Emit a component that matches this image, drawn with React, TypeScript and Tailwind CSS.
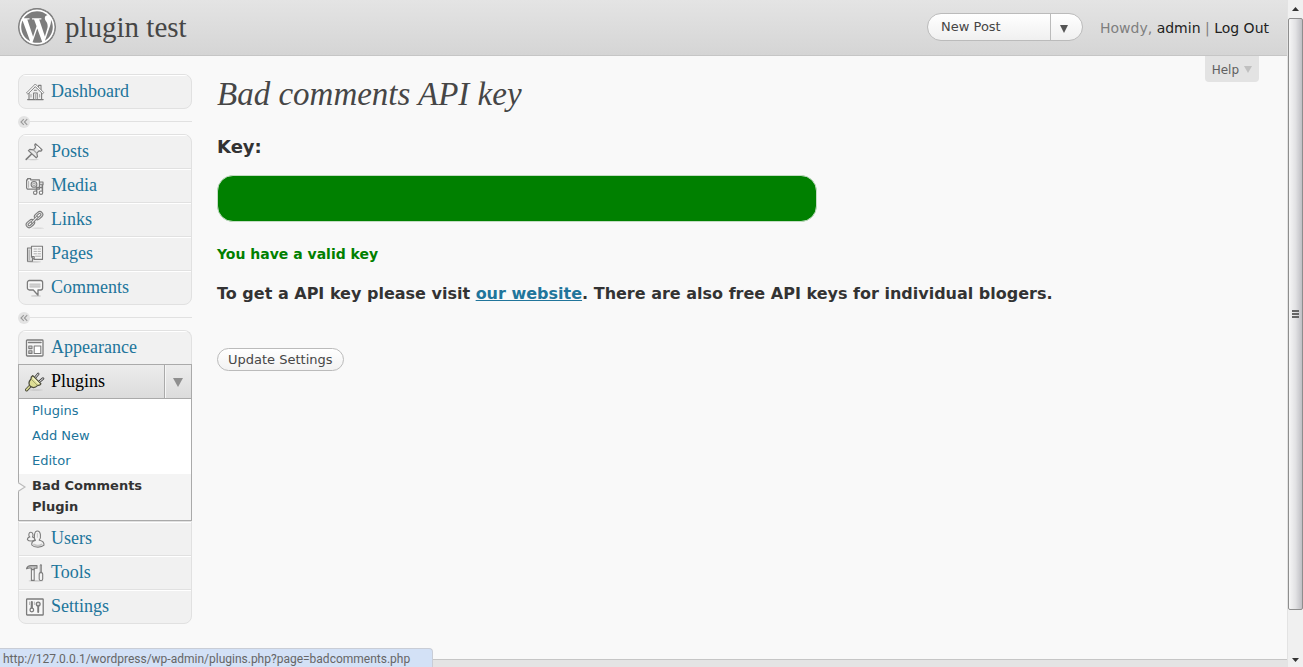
import React from "react";
import { FaWordpress } from "react-icons/fa";

type IconProps = { children: React.ReactNode };

function Icon({ children }: IconProps) {
  return (
    <svg
      viewBox="0 0 20 20"
      className="size-5 shrink-0"
      fill="none"
      stroke="#7c7c7c"
      strokeWidth="1.1"
      strokeLinejoin="round"
      strokeLinecap="round"
      aria-hidden="true"
    >
      {children}
    </svg>
  );
}

const Shade = ({ cx, rx }: { cx: number; rx: number }) => (
  <ellipse cx={cx} cy="17.9" rx={rx} ry="0.9" fill="#cfcfcf" stroke="none" />
);

const DashboardIcon = () => (
  <Icon>
    <path d="M13.6 6V3.4h2.4v5" fill="#fff" />
    <path d="M4 10v7.5h12.6V10L10.3 4.2Z" fill="#efefef" />
    <path d="M1.8 10.6 10.3 2l8.5 8.6-1.3 1.2-7.2-7.2-7.2 7.2Z" fill="#fff" strokeWidth="0.9" />
    <path d="M8.6 17.4V11h3.6v6.4" fill="#fff" />
    <path d="M9.4 8.2h2M2.6 17.6h15.6" />
    <path d="M6 12.6v2.4M14.6 12.6v2.4M10.4 12v5" stroke="#aaa" />
  </Icon>
);

const PostsIcon = () => (
  <Icon>
    <ellipse cx="8" cy="17.6" rx="6" ry="0.6" fill="#cfcfcf" stroke="none" />
    <path d="M6.6 12 1.2 17.4" strokeWidth="1.6" />
    <path
      d="M10.4 1.8 17 7.8 16 9.200l-2-.4-2.200 2.400.7 3.400-1.300 1.200L3.400 8.600 4.800 7.400l3.600.5 2.200-2.600-.9-2.200Z"
      fill="#e9e9e9"
      strokeWidth="1.2"
    />
    <path d="m8.400 8 3.200 3" stroke="#a8a8a8" />
    <path d="m12 4.800 2.600 2.500" stroke="#fff" strokeWidth="1.500" />
  </Icon>
);

const MediaIcon = () => (
  <Icon>
    <path d="M1.600 3.800h1V2.600h3v1.200h8.800v9.400H3.200a1.600 1.600 0 0 1-1.600-1.600Z" fill="#f5f5f5" strokeWidth="1.200" />
    <path d="M3.600 5.400v5.800" stroke="#b5b5b5" />
    <circle cx="9" cy="8.400" r="2.900" fill="#ddd" />
    <circle cx="9" cy="8.400" r="1.200" fill="#fff" stroke="#aaa" />
    <path d="M11.600 11.600v5M17.400 7v9.600M11.600 11.400h5.800" strokeWidth="1.500" />
    <circle cx="10.200" cy="16.700" r="1.700" fill="#fff" />
    <circle cx="16" cy="16.700" r="1.700" fill="#fff" />
    <path d="M14.600 6h3.400v2.800h-3.400Z" fill="#ddd" />
  </Icon>
);

const LinksIcon = () => (
  <Icon>
    <ellipse cx="13" cy="18.200" rx="6" ry="0.600" fill="#d3d3d3" stroke="none" />
    <rect x="-4.600" y="-3" width="9.200" height="6" rx="3" transform="translate(13.600 5.600) rotate(-42)" fill="#e4e4e4" />
    <rect x="-2.400" y="-1.100" width="4.800" height="2.200" rx="1.100" transform="translate(13.800 5.400) rotate(-42)" fill="#fff" />
    <rect x="-4.600" y="-3" width="9.200" height="6" rx="3" transform="translate(5.400 13.600) rotate(-42)" fill="#e4e4e4" />
    <rect x="-2.400" y="-1.100" width="4.800" height="2.200" rx="1.100" transform="translate(5.200 13.800) rotate(-42)" fill="#fff" />
    <path d="m7.200 12.200 4.800-5" strokeWidth="2.800" />
    <path d="m7.200 12.200 4.800-5" stroke="#eee" />
  </Icon>
);

const PagesIcon = () => (
  <Icon>
    <Shade cx={9} rx={7} />
    <path d="M2.500 4h5v13.300h-5Z" fill="#e2e2e2" />
    <path d="M4.200 6v9.400" stroke="#aaa" />
    <path d="M6.500 2.200h11v13.200H9.200l-2.700-2.600Z" fill="#f7f7f7" />
    <path d="M9 5h2.500M13 5h2.500M9 7.400h2.500M13 7.400h2.500M9 9.800h2.500M13 9.800h2.500M10.600 12.200h4.900" stroke="#a5a5a5" strokeWidth="0.900" />
    <path d="M6.600 12.600h2.600v2.600" />
  </Icon>
);

const CommentsIcon = () => (
  <Icon>
    <Shade cx={11} rx={5} />
    <path
      d="M4.400 2.500h11.200a2 2 0 0 1 2 2V10a2 2 0 0 1-2 2H13v5.200L8.300 12H4.400a2 2 0 0 1-2-2V4.500a2 2 0 0 1 2-2Z"
      fill="#fafafa"
      strokeWidth="1.300"
    />
    <path d="M4.600 5.600h10.800V10H4.600Z" fill="#d8d8d8" stroke="none" />
    <path d="M4.800 6.200h10.400M4.800 8.200h10.400" stroke="#bbb" strokeWidth="0.700" />
  </Icon>
);

const AppearanceIcon = () => (
  <Icon>
    <rect x="1.500" y="2" width="16.500" height="16" rx="0.800" fill="#f7f7f7" strokeWidth="1.300" />
    <path d="M3.500 4.600h12.500" strokeWidth="1.500" />
    <rect x="3.800" y="8" width="3.200" height="2.600" fill="#ccc" />
    <rect x="3.800" y="12.800" width="3.200" height="2.600" fill="#ccc" />
    <rect x="9.200" y="8" width="6.600" height="7.500" fill="#fff" />
  </Icon>
);

const PluginsIcon = () => (
  <Icon>
    <ellipse cx="11" cy="18" rx="7" ry="0.700" fill="#c8c8c8" stroke="none" />
    <path d="M5.400 13.800 1.600 17.800" stroke="#4c4c3c" strokeWidth="3.200" />
    <path d="M5.400 13.800 1.600 17.800" stroke="#dede94" strokeWidth="1.500" />
    <path d="m9.800 6 3.400-4M14 10l4-3.400" stroke="#444" strokeWidth="2.600" />
    <path d="m9.800 6 3.400-4M14 10l4-3.400" stroke="#f6f6f6" strokeWidth="1" />
    <path
      d="M7.800 3.600 16 11.800c-.8 1.400-2 1.800-3.200 1.600-2 2-5 2.600-7.200 1.200-2.200-2.200-1.800-5.200.4-7.600-.2-1.400.6-2.800 1.800-3.400Z"
      fill="#dede94"
      stroke="#4c4c3c"
      strokeWidth="1.200"
    />
    <path d="M6.800 7.800 12 13" stroke="#8c8c5c" strokeWidth="0.700" />
    <path d="M8 5.800 13.800 11.600" stroke="#f8f8d0" />
  </Icon>
);

const UsersIcon = () => (
  <Icon>
    <path
      d="M2.400 10.600c0-1.600 1-2.400 2.400-2.600C3.200 6.600 3.600 3.200 5.800 3.200S8.600 6.600 7.400 8c1.600.3 2.400 1.400 2.400 2.800-1.600 1.800-6 1.600-7.400-.2Z"
      fill="#f3f3f3"
    />
    <path
      d="M6.800 16c-.4-2.600 1.200-4.200 3.600-4.600C8.600 9 9 2 12.400 2s4 6.800 1.800 9.200c3 .4 5 2.400 4.800 5-2.400 2.600-9.800 2.600-12.200-.2Z"
      fill="#f3f3f3"
    />
    <path d="M9 15.400c2 1.200 5.600 1.200 7.600 0" stroke="#c6c6c6" strokeWidth="1.800" />
    <path d="M12.400 4.600v3.600" stroke="#ccc" />
  </Icon>
);

const ToolsIcon = () => (
  <Icon>
    <Shade cx={11} rx={7.5} />
    <path d="M1.600 5.200C2.600 3 4.600 2.600 6 2.600h6v2.600H9.200v1.400H6.400V5.200C4.400 4.800 3 5 1.600 5.800Z" fill="#c4c4c4" />
    <path d="M6.400 6.600h2.800V17.400H6.400Z" fill="#f6f6f6" />
    <path d="M15.900 2.400v7" strokeWidth="2.200" />
    <path d="M15.900 2.800v5.600" stroke="#ddd" strokeWidth="0.700" />
    <rect x="14.200" y="9.600" width="3.500" height="7.900" rx="1.500" fill="#f3f3f3" />
  </Icon>
);

const SettingsIcon = () => (
  <Icon>
    <rect x="1.600" y="2" width="16.600" height="16" rx="0.600" fill="#f7f7f7" strokeWidth="1.300" />
    <path d="M6.800 5v6" strokeWidth="2.200" />
    <circle cx="6.800" cy="13" r="1.800" fill="#fff" strokeWidth="1.300" />
    <circle cx="13.200" cy="7" r="1.900" fill="#ddd" strokeWidth="1.300" />
    <path d="M13.200 9.400V15" strokeWidth="1.900" />
    <path d="M4.500 5v2.600M9.400 5v2.600" stroke="#aaa" strokeWidth="0.800" />
  </Icon>
);

type Entry = { label: string; icon: () => React.JSX.Element };

const contentMenu: Entry[] = [
  { label: "Posts", icon: PostsIcon },
  { label: "Media", icon: MediaIcon },
  { label: "Links", icon: LinksIcon },
  { label: "Pages", icon: PagesIcon },
  { label: "Comments", icon: CommentsIcon },
];

const adminMenu: Entry[] = [
  { label: "Users", icon: UsersIcon },
  { label: "Tools", icon: ToolsIcon },
  { label: "Settings", icon: SettingsIcon },
];

function MenuItem({ label, icon: Glyph }: Entry) {
  return (
    <li className="border-b border-[#e1e1e1] last:border-b-0">
      <a
        href="#"
        className="flex h-[33px] items-center gap-1.5 border-t border-white pl-1.5 font-['Liberation_Serif',serif] text-lg/5 text-[#21759b]"
      >
        <Glyph />
        <span className="pb-0.5">{label}</span>
      </a>
    </li>
  );
}

const boxClass = "overflow-hidden rounded-lg border border-[#e1e1e1] bg-[#f1f1f1]";

function Separator() {
  return (
    <div className="flex h-[25px] items-center">
      <button
        type="button"
        aria-label="Collapse menu"
        className="grid size-3 place-items-center rounded-full bg-[#e3e3e3]"
      >
        <svg viewBox="0 0 8 8" className="size-2" fill="none" stroke="#9a9a9a" strokeWidth="1.100" aria-hidden="true">
          <path d="M3.800 1.200 1 4l2.800 2.800M7.200 1.200 4.400 4l2.800 2.800" />
        </svg>
      </button>
      <div className="h-px flex-1 bg-[#e1e1e1]" />
    </div>
  );
}

function Triangle({ className }: { className: string }) {
  return (
    <svg viewBox="0 0 10 9" preserveAspectRatio="none" className={className} fill="currentColor" aria-hidden="true">
      <path d="M0 0h10L5 9Z" />
    </svg>
  );
}

function Sidebar() {
  return (
    <nav className="w-[174px] shrink-0" aria-label="Main menu">
      <ul className={boxClass}>
        <MenuItem label="Dashboard" icon={DashboardIcon} />
      </ul>
      <Separator />
      <ul className={boxClass}>
        {contentMenu.map((item) => (
          <MenuItem key={item.label} {...item} />
        ))}
      </ul>
      <Separator />
      <ul className="overflow-hidden rounded-t-lg border border-b-0 border-[#e1e1e1] bg-[#f1f1f1]">
        <MenuItem label="Appearance" icon={AppearanceIcon} />
      </ul>
      <div className="border border-[#aaa]">
        <div className="flex h-[33px] bg-linear-to-b from-[#ececec] to-[#dcdcdc]">
          <a
            href="#"
            className="flex flex-1 items-center gap-1.5 border-r border-[#aaa] pl-1.5 font-['Liberation_Serif',serif] text-lg/5 text-black"
          >
            <PluginsIcon />
            <span className="pb-0.5">Plugins</span>
          </a>
          <button
            type="button"
            aria-label="Toggle Plugins menu"
            className="grid w-[26px] place-items-center border-l border-[#f6f6f6] pt-0.5 pr-0.5 text-[#8f8f8f]"
          >
            <Triangle className="h-[9px] w-2.5" />
          </button>
        </div>
        <ul className="border-t border-[#aaa] bg-white text-[13px] text-[#21759b]">
          {["Plugins", "Add New", "Editor"].map((label) => (
            <li key={label}>
              <a href="#" className="block pb-0.5 pl-[13px] leading-[23px]">
                {label}
              </a>
            </li>
          ))}
          <li className="relative bg-[#f4f4f4] pt-px pr-4 pb-[3px] pl-[13px] font-bold text-[#333]">
            <svg
              viewBox="0 0 8 10"
              className="absolute top-2 -left-px h-2.5 w-2"
              fill="#f9f9f9"
              stroke="#bbb"
              strokeWidth="1.200"
              aria-hidden="true"
            >
              <path d="M0 0.500 7 5 0 9.500" />
            </svg>
            <a href="#" className="block leading-[21px]">
              Bad Comments Plugin
            </a>
          </li>
        </ul>
      </div>
      <ul className="overflow-hidden rounded-b-lg border border-[#e1e1e1] bg-[#f1f1f1]">
        {adminMenu.map((item) => (
          <MenuItem key={item.label} {...item} />
        ))}
      </ul>
    </nav>
  );
}

function Header() {
  return (
    <header className="flex h-14 items-center justify-between border-b border-[#c6c6c6] bg-linear-to-b from-[#e4e4e4] to-[#d5d5d5] px-[18px] pb-0.5">
      <div className="flex items-center gap-[9px]">
        <div className="rounded-full bg-white ring-1 ring-[#7d7d7d] ring-inset">
          <FaWordpress className="size-[38px] text-[#7d7d7d]" />
        </div>
        <h1 className="font-['Liberation_Serif',serif] text-[29px]/8 text-[#464646]">
          <a href="#">plugin test</a>
        </h1>
      </div>
      <div className="flex items-center gap-[17px]">
        <div className="flex h-7 w-[156px] overflow-hidden rounded-full border border-[#bbb] bg-linear-to-b from-white to-[#f0f0f0] text-[13px] text-[#464646]">
          <a href="#" className="flex flex-1 items-center border-r border-[#bbb] pl-[13px]">
            New Post
          </a>
          <button type="button" aria-label="More actions" className="w-[31px] pt-1 pl-[9px] text-[#555]">
            <Triangle className="h-2 w-2" />
          </button>
        </div>
        <p className="pt-0.5 text-sm text-[#7f7f7f]">
          Howdy, <a href="#" className="text-[#222]">admin</a> |{" "}
          <a href="#" className="text-[#222]">Log Out</a>
        </p>
      </div>
    </header>
  );
}

function Scrollbar() {
  return (
    <div className="flex w-4 shrink-0 flex-col border-l border-[#e3e3e3] bg-[#f0f0f0]" aria-hidden="true">
      <div className="grid h-[18px] place-items-center text-[#333]">
        <Triangle className="h-1 w-[7px] rotate-180" />
      </div>
      <div className="flex grow-[592] basis-0 flex-col items-center justify-center gap-px rounded-xs border border-[#8e8e8e] bg-linear-to-r from-[#f6f6f6] via-[#e2e2e4] to-[#bfbfc4]">
        <i className="h-0.5 w-[7px] bg-[#666]" />
        <i className="h-0.5 w-[7px] bg-[#666]" />
        <i className="h-0.5 w-[7px] bg-[#666]" />
      </div>
      <div className="grow-[42] basis-0" />
      <div className="grid h-[15px] place-items-center text-[#333]">
        <Triangle className="h-1 w-[7px]" />
      </div>
    </div>
  );
}

function SettingsForm() {
  return (
    <form className="min-w-0 flex-1 text-[#333]" onSubmit={(event) => event.preventDefault()}>
      <h2 className="font-['Liberation_Serif',serif] text-[33px]/10 text-[#464646] italic">Bad comments API key</h2>
      <label htmlFor="api-key" className="mt-[21px] block text-lg/6 font-bold">
        Key:
      </label>
      <input
        id="api-key"
        type="text"
        className="mt-4 block h-[47px] w-full max-w-[600px] rounded-2xl border border-[#c3dcc3] bg-[#008000] px-3 text-white"
      />
      <p className="mt-[22px] text-sm/5 font-bold text-[#008000]">You have a valid key</p>
      <p className="mt-[18px] text-base/6 font-bold">
        To get a API key please visit{" "}
        <a href="#" className="text-[#21759b] underline">our website</a>. There are also free API keys for individual
        blogers.
      </p>
      <button
        type="submit"
        className="mt-[42px] h-[23px] rounded-full border border-[#bbb] bg-linear-to-b from-white to-[#f2f2f2] px-2.5 pt-px text-[13px]/5 text-[#464646]"
      >
        Update Settings
      </button>
    </form>
  );
}

export default function App() {
  return (
    <div className="relative flex min-h-screen bg-[#f9f9f9] font-['DejaVu_Sans',sans-serif]">
      <div className="flex min-w-0 flex-1 flex-col">
        <Header />
        <main className="relative flex flex-1 items-start gap-[25px] pt-[18px] pl-[18px]">
          <Sidebar />
          <SettingsForm />
          <button
            type="button"
            className="absolute top-0 right-7 flex h-[26px] items-center gap-[5px] rounded-b bg-[#e3e3e3] px-[7px] pt-px text-xs text-[#606060]"
          >
            Help
            <Triangle className="h-[7px] w-2 text-[#c0c0c0]" />
          </button>
        </main>
        <footer className="h-2 border-t border-[#c6c6c6] bg-[#e4e4e4]" />
      </div>
      <Scrollbar />
      <div className="absolute bottom-0 left-0 h-[19px] rounded-tr border-t border-r border-[#c9cdd6] bg-[#d3e1f6] pr-[22px] pl-[3px] font-['Roboto',sans-serif] text-xs/5 text-[#666]">
        http://127.0.0.1/wordpress/wp-admin/plugins.php?page=badcomments.php
      </div>
    </div>
  );
}
